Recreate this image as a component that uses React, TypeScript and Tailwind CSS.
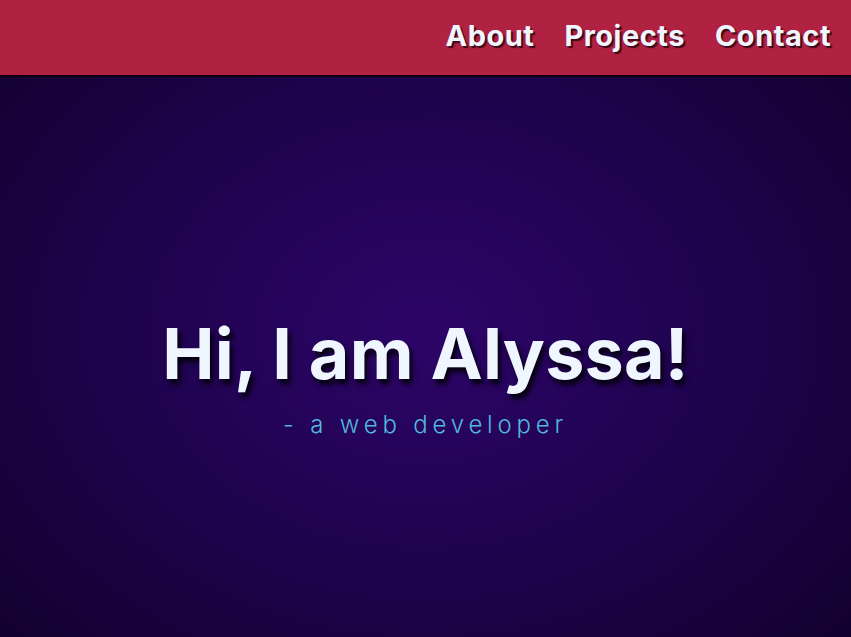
const navLinks = ['About', 'Projects', 'Contact'];

export default function App() {
  return (
    <div className="relative h-[637px] w-full overflow-hidden font-['Inter','Open_Sans',sans-serif]">
      {/* nav */}
      <nav className="absolute inset-x-0 top-0 z-10 flex h-[75px] items-center justify-end bg-[#b02142] pb-[3px] pr-[20px] shadow-[0_2px_0_#0a0010]">
        <ul className="flex gap-[30px]">
          {navLinks.map((l) => (
            <li key={l}>
              <a
                href={`#${l.toLowerCase()}`}
                className="text-[29px] font-bold tracking-[0.5px] text-[#f0f6ff] [text-shadow:2px_2px_1px_#3a0a18]"
              >
                {l}
              </a>
            </li>
          ))}
        </ul>
      </nav>

      {/* welcome */}
      <section className="flex h-full flex-col items-center justify-center bg-[radial-gradient(ellipse_at_50%_52%,#2d0568_0%,#1f0350_45%,#13002c_100%)] pt-[118px]">
        <h1 className="text-[70px] font-bold leading-none tracking-[0.2px] text-[#f0f6ff] [text-shadow:3px_5px_5px_#05000f]">
          Hi, I am Alyssa!
        </h1>
        <p className="mt-[24px] text-[24px] font-light leading-none tracking-[4.8px] text-[#52b8dc]">
          - a web developer
        </p>
      </section>
    </div>
  );
}
